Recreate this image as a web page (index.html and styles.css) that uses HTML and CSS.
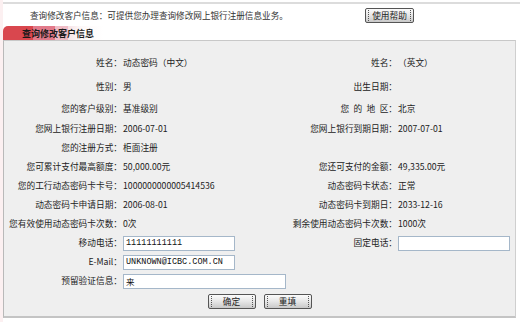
FILE: index.html
```html
<!DOCTYPE html>
<html lang="zh-CN">
<head>
    <meta charset="UTF-8">
    <title>查询修改客户信息</title>
    <link rel="stylesheet" href="styles.css">
</head>
<body>
    <div class="page">
        <div class="topo">
            <span class="intro">查询修改客户信息：可提供您办理查询修改网上银行注册信息业务。</span>
            <button class="btn btn-ajuda"><span>使用帮助</span></button>
        </div>
        <div class="aba">查询修改客户信息</div>
        <div class="painel">
            <div class="grade">
                <span class="lbl">姓名：</span><span class="val">动态密码（中文）</span>
                <span class="lbl">姓名：</span><span class="val">（英文）</span>

                <span class="lbl">性别：</span><span class="val">男</span>
                <span class="lbl">出生日期：</span><span class="val"></span>

                <span class="lbl">您的客户级别：</span><span class="val">基准级别</span>
                <span class="lbl">您&ensp;的&ensp;地&ensp;区：</span><span class="val">北京</span>

                <span class="lbl">您网上银行注册日期：</span><span class="val">2006-07-01</span>
                <span class="lbl">您网上银行到期日期：</span><span class="val">2007-07-01</span>

                <span class="lbl">您的注册方式：</span><span class="val">柜面注册</span>
                <span class="lbl"></span><span class="val"></span>

                <span class="lbl">您可累计支付最高额度：</span><span class="val">50,000.00元</span>
                <span class="lbl">您还可支付的金额：</span><span class="val">49,335.00元</span>

                <span class="lbl">您的工行动态密码卡卡号：</span><span class="val">1000000000005414536</span>
                <span class="lbl">动态密码卡状态：</span><span class="val">正常</span>

                <span class="lbl">动态密码卡申请日期：</span><span class="val">2006-08-01</span>
                <span class="lbl">动态密码卡到期日：</span><span class="val">2033-12-16</span>

                <span class="lbl">您有效使用动态密码卡次数：</span><span class="val">0次</span>
                <span class="lbl">剩余使用动态密码卡次数：</span><span class="val">1000次</span>

                <span class="lbl">移动电话：</span><span class="val"><input type="text" class="campo" value="11111111111"></span>
                <span class="lbl">固定电话：</span><span class="val"><input type="text" class="campo"></span>

                <span class="lbl">E-Mail：</span><span class="val"><input type="text" class="campo" value="UNKNOWN@ICBC.COM.CN"></span>
                <span class="lbl"></span><span class="val"></span>

                <span class="lbl">预留验证信息：</span><span class="val"><input type="text" class="campo campo-longo" value="来"></span>
                <span class="lbl"></span><span class="val"></span>
            </div>
            <div class="acoes">
                <button class="btn btn-form"><span>确定</span></button>
                <button class="btn btn-form"><span>重填</span></button>
            </div>
        </div>
    </div>
</body>
</html>
```

FILE: styles.css
```css
*{
    padding: 0;
    margin: 0;
    box-sizing: border-box;
}
body {
    background-color: #fff;
    font-family: "Noto Sans CJK SC", "Liberation Sans", sans-serif;
    font-size: 8.7px;
    line-height: 1;
    color: #222;
    border-left: 3px solid #fcf0f1;
    padding-top: 2px;
}
.page {
    border-top: 2px solid #dcdcdc;
    height: 320px;
}
.topo {
    display: grid;
    grid-template-columns: 335px auto;
    align-items: center;
    height: 22px;
    padding-left: 27px;
}
.intro {
    font-size: 8.6px;
    color: #333;
}
.btn {
    display: inline-flex;
    align-items: center;
    height: 15px;
    padding: 0 2px;
    border: 1px solid #555;
    border-radius: 2px;
    background: linear-gradient(#fbfbfb, #e6e6e6 50%, #c9c9c9);
    font-family: "Noto Sans CJK SC", sans-serif;
    font-size: 8.7px;
    color: #222;
    cursor: pointer;
}
.btn span {
    flex: 1;
    height: 11px;
    line-height: 11px;
    text-align: center;
    border-left: 1px dotted #555;
    border-right: 1px dotted #555;
}
.btn-ajuda {
    width: 49px;
}
.btn-form {
    width: 48px;
}
.aba {
    height: 14px;
    width: 110px;
    padding-left: 19px;
    display: flex;
    align-items: center;
    font-size: 9px;
    font-weight: bold;
    color: #1a1a1a;
    border-top-left-radius: 5px;
    background: linear-gradient(to right, #d9474e 0, #d9474e 30px, #e27a8a 30px, #e27a8a 52px, #efbcc6 52px, #efbcc6 65px, #f6e3e6 65px, #fdf8f8 78px, #fff 100px);
}
.painel {
    width: 513px;
    height: 278px;
    background-color: #efefef;
    border-top: 1px solid #c8c8c8;
    border-left: 1px solid #b9b9b9;
    border-right: 1px solid #cfcfcf;
    border-bottom: 2px solid #c4c4c4;
    padding-top: 9.5px;
}
.grade {
    display: grid;
    grid-template-columns: 118px 164px 111px 1fr;
    grid-template-rows: 25px 23px 21px;
    grid-auto-rows: 19px;
}
.lbl, .val {
    display: flex;
    align-items: center;
    white-space: nowrap;
}
.lbl {
    justify-content: flex-end;
}
.val {
    padding-left: 1px;
}
.campo {
    width: 112px;
    height: 15px;
    border: 1px solid #a5b7c9;
    background-color: #fff;
    padding-left: 2px;
    font-family: "Liberation Mono", monospace;
    font-size: 8.5px;
    color: #111;
}
.campo-longo {
    width: 163px;
    font-family: "Noto Sans CJK SC", sans-serif;
}
.acoes {
    display: flex;
    justify-content: center;
    gap: 8px;
    margin-top: 3.5px;
}
```
